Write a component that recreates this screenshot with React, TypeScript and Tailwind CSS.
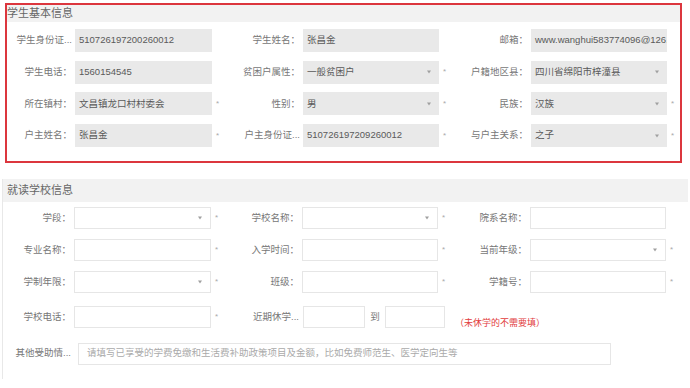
import React from "react";

const FONT = { fontFamily: '"Liberation Sans", "Noto Sans CJK SC", Arial, sans-serif' };

type FieldProps = {
  label: string;
  labelW: number;
  inputW: number;
  tailW: number;
  value?: string;
  placeholder?: string;
  disabled?: boolean;
  select?: boolean;
  star?: boolean;
  h?: number;
};

function Arrow() {
  return (
    <span className="absolute right-[8px] top-1/2 -translate-y-1/2 w-0 h-0 border-l-[2.5px] border-r-[2.5px] border-t-[3px] border-l-transparent border-r-transparent border-t-[#a0a0a0]" />
  );
}

function Field({ label, labelW, inputW, tailW, value, placeholder, disabled, select, star, h = 23 }: FieldProps) {
  return (
    <div className="flex items-center">
      <div
        className="text-right text-[9.5px] text-[#777] whitespace-nowrap overflow-hidden pr-[1px]"
        style={{ width: labelW }}
      >
        {label}
      </div>
      <div
        className={
          "relative ml-[2px] flex items-center px-[4px] text-[9.5px] whitespace-nowrap overflow-hidden " +
          (disabled
            ? "bg-[#e9e9e9] text-[#5a5a5a]"
            : "bg-white border border-[#e6e6e6] text-[#5a5a5a]")
        }
        style={{ width: inputW, height: h }}
      >
        {value ? <span>{value}</span> : null}
        {placeholder ? <span className="text-[#aaa]">{placeholder}</span> : null}
        {select ? <Arrow /> : null}
      </div>
      <div className="pl-[4px] text-[8px] text-[#aaa] leading-none" style={{ width: tailW }}>
        {star ? "*" : ""}
      </div>
    </div>
  );
}

export default function App() {
  return (
    <div className="w-[690px] h-[388px] bg-white overflow-hidden" style={FONT}>
      {/* Section 1 */}
      <div className="pt-[3px] pl-[5px]">
        <div className="w-[677px] h-[160px] border-2 border-[#dc363e]">
          <div className="h-[17px] bg-[#f2f2f2] text-[11px] leading-[17px] text-[#666]">学生基本信息</div>
          <div className="pt-[7px] flex flex-col gap-[8.7px]">
            <div className="flex">
              <Field label="学生身份证..." labelW={66} inputW={137} tailW={18} value="510726197200260012" disabled />
              <Field label="学生姓名：" labelW={71} inputW={136} tailW={21} value="张昌金" disabled />
              <Field label="邮箱：" labelW={69} inputW={136} tailW={13} value="www.wanghui583774096@126.c" disabled />
            </div>
            <div className="flex">
              <Field label="学生电话：" labelW={66} inputW={137} tailW={18} value="1560154545" disabled />
              <Field label="贫困户属性：" labelW={71} inputW={136} tailW={21} value="一般贫困户" disabled select star />
              <Field label="户籍地区县：" labelW={69} inputW={136} tailW={13} value="四川省绵阳市梓潼县" disabled select />
            </div>
            <div className="flex">
              <Field label="所在镇村：" labelW={66} inputW={137} tailW={18} value="文昌镇龙口村村委会" disabled star />
              <Field label="性别：" labelW={71} inputW={136} tailW={21} value="男" disabled select star />
              <Field label="民族：" labelW={69} inputW={136} tailW={13} value="汉族" disabled select star />
            </div>
            <div className="flex">
              <Field label="户主姓名：" labelW={66} inputW={137} tailW={18} value="张昌金" disabled star />
              <Field label="户主身份证..." labelW={71} inputW={136} tailW={21} value="510726197209260012" disabled star />
              <Field label="与户主关系：" labelW={69} inputW={136} tailW={13} value="之子" disabled select star />
            </div>
          </div>
        </div>
      </div>

      {/* Section 2 */}
      <div className="mt-[16px] ml-[2px] w-[686px] h-[200px] border-l border-[#e8e8e8]">
        <div className="h-[23px] bg-[#f2f2f2] text-[11px] leading-[23px] text-[#666] pl-[4px]">就读学校信息</div>
        <div className="pt-[5px] flex flex-col gap-[10px]">
          <div className="flex">
            <Field label="学段：" labelW={69} inputW={137} tailW={18} select star h={22} />
            <Field label="学校名称：" labelW={71} inputW={136} tailW={21} select star h={22} />
            <Field label="院系名称：" labelW={69} inputW={136} tailW={13} h={22} />
          </div>
          <div className="flex">
            <Field label="专业名称：" labelW={69} inputW={137} tailW={18} star h={22} />
            <Field label="入学时间：" labelW={71} inputW={136} tailW={21} star h={22} />
            <Field label="当前年级：" labelW={69} inputW={136} tailW={13} select star h={22} />
          </div>
          <div className="flex">
            <Field label="学制年限：" labelW={69} inputW={137} tailW={18} select star h={22} />
            <Field label="班级：" labelW={71} inputW={136} tailW={21} star h={22} />
            <Field label="学籍号：" labelW={69} inputW={136} tailW={13} star h={22} />
          </div>
          <div className="flex">
            <Field label="学校电话：" labelW={69} inputW={137} tailW={18} star h={22} />
            <div className="flex items-center">
              <div className="w-[71px] text-right text-[9.5px] text-[#777] whitespace-nowrap pr-[1px]">近期休学...</div>
              <div className="ml-[3px] w-[62px] h-[22px] border border-[#e6e6e6] bg-white" />
              <div className="w-[20px] text-center text-[9.5px] text-[#777]">到</div>
              <div className="w-[60px] h-[22px] border border-[#e6e6e6] bg-white" />
              <div className="ml-[10px] mt-[14px] text-[9px] text-[#e23c3c] whitespace-nowrap">（未休学的不需要填）</div>
            </div>
          </div>
          <div className="flex items-center mt-[2px]">
            <div className="w-[69px] text-right text-[9.5px] text-[#777] whitespace-nowrap pr-[1px]">其他受助情...</div>
            <div className="ml-[6px] w-[533px] h-[22px] border border-[#e6e6e6] bg-white flex items-center px-[8px] text-[9.5px] text-[#aaa] whitespace-nowrap overflow-hidden">
              请填写已享受的学费免缴和生活费补助政策项目及金额，比如免费师范生、医学定向生等
            </div>
          </div>
        </div>
      </div>
    </div>
  );
}
